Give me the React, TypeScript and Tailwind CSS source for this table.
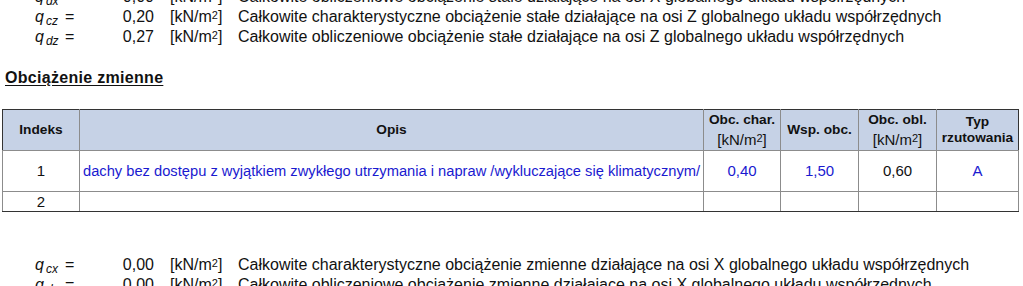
import React from 'react';

const FONT = { fontFamily: '"Liberation Sans", Arial, sans-serif' };

interface LoadLine {
  sym: string;
  sub: string;
  value: string;
  desc: string;
}

const TOP_LINES: LoadLine[] = [
  { sym: 'q', sub: 'dx', value: '0,00', desc: 'Całkowite obliczeniowe obciążenie stałe działające na osi X globalnego układu współrzędnych' },
  { sym: 'q', sub: 'cz', value: '0,20', desc: 'Całkowite charakterystyczne obciążenie stałe działające na osi Z globalnego układu współrzędnych' },
  { sym: 'q', sub: 'dz', value: '0,27', desc: 'Całkowite obliczeniowe obciążenie stałe działające na osi Z globalnego układu współrzędnych' },
];

const BOTTOM_LINES: LoadLine[] = [
  { sym: 'q', sub: 'cx', value: '0,00', desc: 'Całkowite charakterystyczne obciążenie zmienne działające na osi X globalnego układu współrzędnych' },
  { sym: 'q', sub: 'dx', value: '0,00', desc: 'Całkowite obliczeniowe obciążenie zmienne działające na osi X globalnego układu współrzędnych' },
];

function Unit() {
  return (
    <span>
      [kN/m<sup className="text-[11px] relative -top-[3px]">2</sup>]
    </span>
  );
}

function Line({ line }: { line: LoadLine }) {
  return (
    <div className="flex items-center h-5 text-[16px] text-[#111] whitespace-nowrap">
      <span className="w-[35px]" />
      <span className="w-[30px] italic">
        {line.sym}
        <span className="text-[12px] relative top-[3px] ml-[2px]">{line.sub}</span>
      </span>
      <span className="w-[20px]">=</span>
      <span className="w-[69px] text-right">{line.value}</span>
      <span className="w-[16px]" />
      <span className="w-[68px]">
        <Unit />
      </span>
      <span>{line.desc}</span>
    </div>
  );
}

const cell = 'border border-[#8c8c8c]';

export default function App() {
  return (
    <div className="w-[1023px] h-[286px] overflow-hidden bg-white" style={FONT}>
      <div className="-mt-[13px]">
        {TOP_LINES.map((l) => (
          <Line key={l.sub + l.value} line={l} />
        ))}
      </div>

      {/* Section heading */}
      <div className="mt-[21px] pl-[5px] h-5 flex items-center">
        <span className="text-[16px] font-bold underline underline-offset-2 text-[#111] tracking-[0.3px]">
          Obciążenie zmienne
        </span>
      </div>

      {/* Table */}
      <div className="mt-[21px] ml-[2px]">
        <table className="border-collapse border border-[#333] text-[#111] table-fixed">
          <colgroup>
            <col className="w-[77px]" />
            <col className="w-[624px]" />
            <col className="w-[77px]" />
            <col className="w-[78px]" />
            <col className="w-[78px]" />
            <col className="w-[82px]" />
          </colgroup>
          <thead>
            <tr className="h-[41px] bg-[#c6d2e6] text-[13.7px] font-bold leading-[16px]">
              <th className={`${cell} border-l-[#333] border-t-[#333] font-bold`}>Indeks</th>
              <th className={`${cell} border-t-[#333] font-bold`}>Opis</th>
              <th className={`${cell} border-t-[#333] font-bold`}>
                <div className="-mt-[4px]">Obc. char.</div>
                <div className="font-normal text-[15px] leading-[18px] mt-[3px] -mb-[4px]">
                  <Unit />
                </div>
              </th>
              <th className={`${cell} border-t-[#333] font-bold`}>Wsp. obc.</th>
              <th className={`${cell} border-t-[#333] font-bold`}>
                <div className="-mt-[4px]">Obc. obl.</div>
                <div className="font-normal text-[15px] leading-[18px] mt-[3px] -mb-[4px]">
                  <Unit />
                </div>
              </th>
              <th className={`${cell} border-t-[#333] border-r-[#333] font-bold`}>
                <div>Typ</div>
                <div>rzutowania</div>
              </th>
            </tr>
          </thead>
          <tbody className="text-[15px]">
            <tr className="h-[41px]">
              <td className={`${cell} text-center`}>1</td>
              <td className={`${cell} text-[#1a1ad0] text-[14.7px] pl-[3px] whitespace-nowrap`}>
                dachy bez dostępu z wyjątkiem zwykłego utrzymania i napraw /wykluczające się klimatycznym/
              </td>
              <td className={`${cell} text-center text-[#1a1ad0]`}>0,40</td>
              <td className={`${cell} text-center text-[#1a1ad0]`}>1,50</td>
              <td className={`${cell} text-center`}>0,60</td>
              <td className={`${cell} text-center text-[#1a1ad0]`}>A</td>
            </tr>
            <tr className="h-[20px]">
              <td className={`${cell} border-b-[#333] text-center leading-[18px]`}>2</td>
              <td className={`${cell} border-b-[#333]`} />
              <td className={`${cell} border-b-[#333]`} />
              <td className={`${cell} border-b-[#333]`} />
              <td className={`${cell} border-b-[#333]`} />
              <td className={`${cell} border-b-[#333]`} />
            </tr>
          </tbody>
        </table>
      </div>

      <div className="mt-[43px]">
        {BOTTOM_LINES.map((l) => (
          <Line key={l.sub + l.value} line={l} />
        ))}
      </div>
    </div>
  );
}
